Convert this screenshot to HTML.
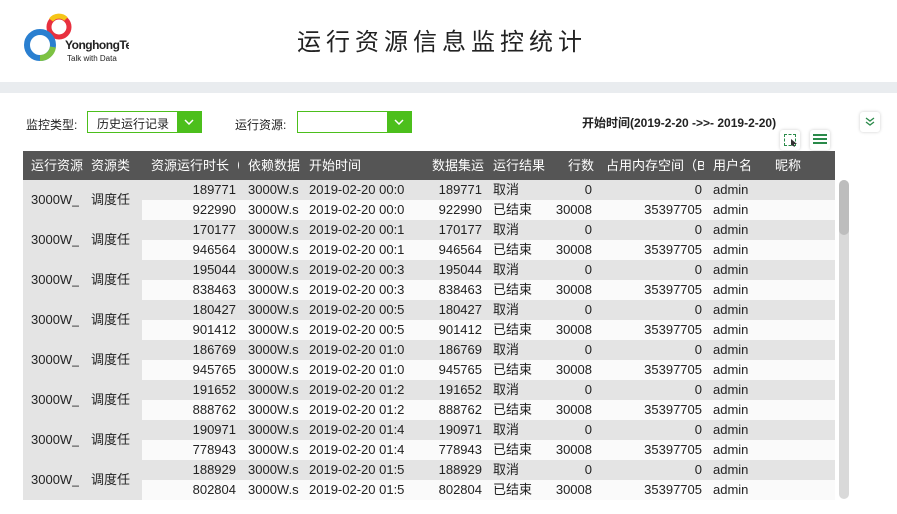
<!DOCTYPE html><html><head><meta charset="utf-8"><style>
body{margin:0;width:897px;height:514px;background:#fff;position:relative;overflow:hidden;font-family:"Liberation Sans","Noto Sans CJK SC",sans-serif;font-size:13px;color:#222}
.a{position:absolute;white-space:nowrap}
.hd{position:absolute;left:23px;top:151px;width:812px;height:29px;background:#555;color:#fff}
.c{position:absolute;line-height:20px;white-space:nowrap;overflow:hidden}
.r{text-align:right}
.sel{position:absolute;height:22px;border:1px solid #4cbf1c;background:#fff;box-sizing:border-box}
.sel .b{position:absolute;right:0;top:0;width:24px;height:20px;background:#4cbf1c}
.ib{position:absolute;width:20px;height:20px;background:#fff;border-radius:3px;box-shadow:0 0 3px #ccc}
</style></head><body>
<svg class="a" style="left:22px;top:10px" width="60" height="55" viewBox="0 0 60 55">
<circle cx="37" cy="17" r="10" fill="none" stroke="#e8303f" stroke-width="5"/>
<path d="M29 10 A10 10 0 0 1 44 9" stroke="#f5c518" stroke-width="5" fill="none"/>
<circle cx="18" cy="35" r="13" fill="none" stroke="#2a7fd0" stroke-width="6"/>
<path d="M18 48 A13 13 0 0 0 31 37" stroke="#7dc242" stroke-width="6" fill="none"/>
</svg>
<div class="a" style="left:65px;top:38px;width:64px;overflow:hidden;font-size:12px;font-weight:bold;letter-spacing:-0.5px">YonghongTech</div>
<div class="a" style="left:67px;top:54px;font-size:8px">Talk with Data</div>
<div class="a" style="left:297px;top:22px;font-size:24px;letter-spacing:5px;font-family:'Noto Sans CJK SC',sans-serif">运行资源信息监控统计</div>
<div class="a" style="left:0;top:82px;width:897px;height:11px;background:#e9ecef"></div>
<div class="a" style="left:26px;top:116px;font-size:12px">监控类型:</div>
<div class="sel" style="left:87px;top:111px;width:115px"><span class="a" style="left:9px;top:3px;font-size:12px">历史运行记录</span><div class="b"><svg class="a" style="left:7px;top:7px" width="10" height="6"><path d="M1 1L5 5L9 1" stroke="#fff" stroke-width="1.5" fill="none"/></svg></div></div>
<div class="a" style="left:235px;top:116px;font-size:12px">运行资源:</div>
<div class="sel" style="left:297px;top:111px;width:115px"><div class="b"><svg class="a" style="left:7px;top:7px" width="10" height="6"><path d="M1 1L5 5L9 1" stroke="#fff" stroke-width="1.5" fill="none"/></svg></div></div>
<div class="a" style="left:582px;top:114px;font-size:12px;font-weight:bold">开始时间(2019-2-20 -&gt;&gt;- 2019-2-20)</div>
<div class="ib" style="left:860px;top:112px"><svg class="a" style="left:5px;top:5px" width="10" height="10"><path d="M1 1L5 4L9 1M1 5L5 8L9 5" stroke="#2a8a4a" stroke-width="1.3" fill="none"/></svg></div>
<div class="ib" style="left:780px;top:130px"><div class="a" style="left:4px;top:4px;width:10px;height:10px;border:1px dashed #2a8a4a"></div><svg class="a" style="left:11px;top:9px" width="7" height="9"><path d="M0 0L6 5L3 5L4 8L0 6Z" fill="#333"/></svg></div>
<div class="ib" style="left:810px;top:130px"><div class="a" style="left:3px;top:4px;width:14px;height:12px;background:repeating-linear-gradient(#2a8a4a 0 2px,#fff 2px 4px)"></div></div>
<div class="hd">
<span class="c" style="left:8px;top:5px">运行资源</span><span class="c" style="left:68px;top:5px">资源类</span><span class="c" style="left:128px;top:5px;width:88px">资源运行时长（</span><span class="c" style="left:225px;top:5px">依赖数据</span><span class="c" style="left:286px;top:5px">开始时间</span><span class="c" style="left:409px;top:5px">数据集运</span><span class="c" style="left:470px;top:5px">运行结果</span><span class="c" style="left:545px;top:5px">行数</span><span class="c" style="left:583px;top:5px;width:98px">占用内存空间（By</span><span class="c" style="left:690px;top:5px">用户名</span><span class="c" style="left:752px;top:5px">昵称</span>
</div>
<div id="t"></div>
<div class="a" style="left:839px;top:180px;width:10px;height:319px;background:#d9d9d9;border-radius:5px"></div>
<div class="a" style="left:839px;top:180px;width:10px;height:55px;background:#bdbdbd;border-radius:5px"></div>
<script>
var d=[["189771","922990","00:0"],["170177","946564","00:1"],["195044","838463","00:3"],["180427","901412","00:5"],["186769","945765","01:0"],["191652","888762","01:2"],["190971","778943","01:4"],["188929","802804","01:5"]];
var h="";
d.forEach(function(g,i){var y=180+i*40;
h+='<div class="a" style="left:23px;top:'+y+'px;width:812px;height:40px;background:#e4e4e4"></div>';
h+='<div class="a" style="left:142px;top:'+(y+20)+'px;width:693px;height:20px;background:#fafafa"></div>';
h+='<span class="c" style="left:31px;top:'+(y+10)+'px">3000W_</span><span class="c" style="left:91px;top:'+(y+10)+'px">调度任</span>';
for(var k=0;k<2;k++){var yy=y+k*20,n=g[k];
h+='<span class="c r" style="left:150px;width:86px;top:'+yy+'px">'+n+'</span><span class="c" style="left:248px;top:'+yy+'px">3000W.s</span><span class="c" style="left:309px;top:'+yy+'px">2019-02-20 '+g[2]+'</span><span class="c r" style="left:420px;width:62px;top:'+yy+'px">'+n+'</span><span class="c" style="left:493px;top:'+yy+'px">'+(k?'已结束':'取消')+'</span><span class="c r" style="left:540px;width:52px;top:'+yy+'px">'+(k?'30008':'0')+'</span><span class="c r" style="left:600px;width:102px;top:'+yy+'px">'+(k?'35397705':'0')+'</span><span class="c" style="left:713px;top:'+yy+'px">admin</span>';}
});
document.getElementById("t").innerHTML=h;
</script>
</body></html>
